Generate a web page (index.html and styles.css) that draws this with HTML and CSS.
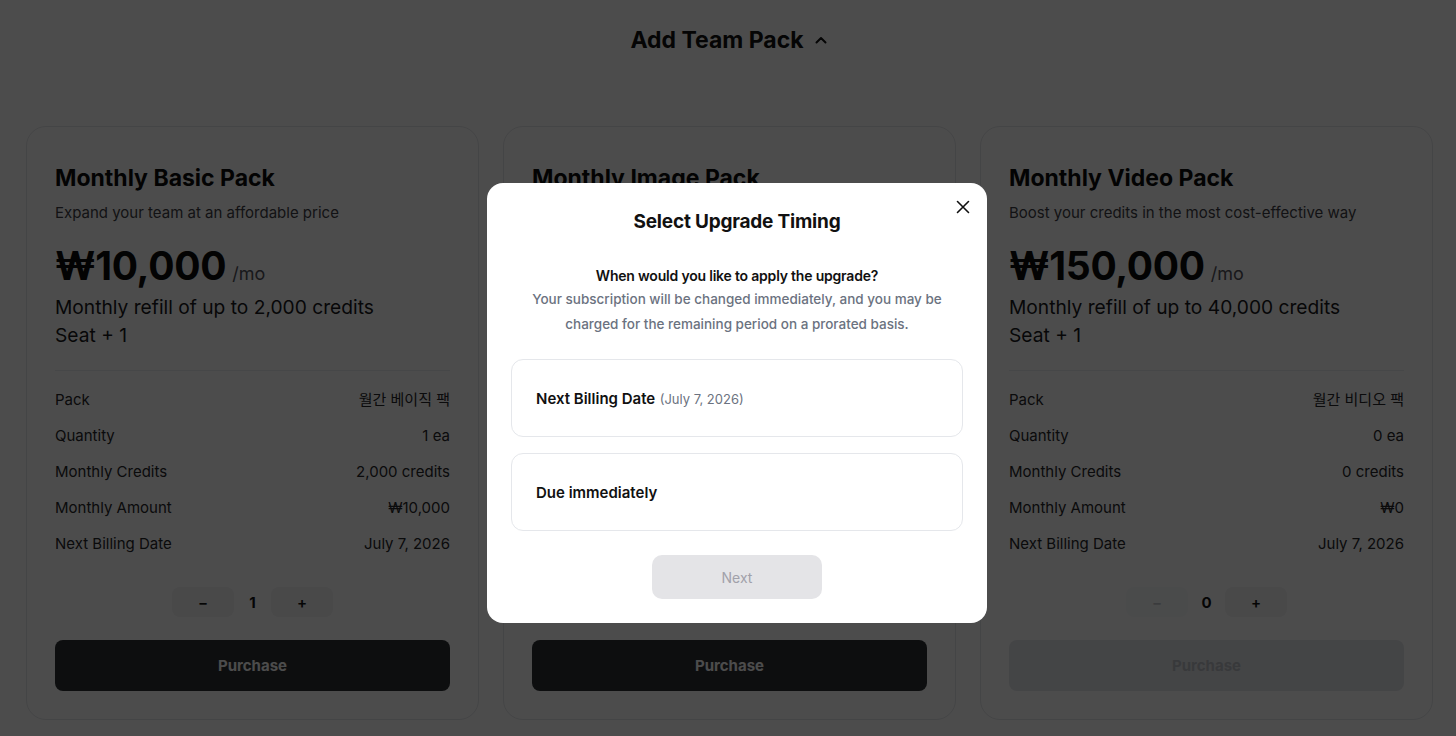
FILE: index.html
```html
<!DOCTYPE html>
<html lang="en">
<head>
<meta charset="utf-8">
<title>Add Team Pack</title>
<link rel="stylesheet" href="styles.css">
</head>
<body>
<main class="page">
  <header class="section-head">
    <h2 class="section-title">Add Team Pack</h2>
    <svg class="chev" width="16" height="16" viewBox="0 0 16 16" fill="none"><path d="M3.5 10.5L8 6l4.5 4.5" stroke="#111" stroke-width="2" stroke-linecap="round" stroke-linejoin="round"/></svg>
  </header>

  <section class="cards">
    <article class="card">
      <h3 class="card-title">Monthly Basic Pack</h3>
      <p class="card-sub">Expand your team at an affordable price</p>
      <div class="price"><span class="amount">₩10,000</span><span class="per">/mo</span></div>
      <p class="refill">Monthly refill of up to 2,000 credits<br>Seat + 1</p>
      <dl class="details">
        <div class="row"><dt>Pack</dt><dd>월간 베이직 팩</dd></div>
        <div class="row"><dt>Quantity</dt><dd>1 ea</dd></div>
        <div class="row"><dt>Monthly Credits</dt><dd>2,000 credits</dd></div>
        <div class="row"><dt>Monthly Amount</dt><dd>₩10,000</dd></div>
        <div class="row"><dt>Next Billing Date</dt><dd>July 7, 2026</dd></div>
      </dl>
      <div class="stepper">
        <button class="step">−</button>
        <span class="qty">1</span>
        <button class="step">+</button>
      </div>
      <button class="buy">Purchase</button>
    </article>

    <article class="card">
      <h3 class="card-title">Monthly Image Pack</h3>
      <p class="card-sub">Create more images for your whole team</p>
      <div class="price"><span class="amount">₩50,000</span><span class="per">/mo</span></div>
      <p class="refill">Monthly refill of up to 12,000 credits<br>Seat + 1</p>
      <dl class="details">
        <div class="row"><dt>Pack</dt><dd>월간 이미지 팩</dd></div>
        <div class="row"><dt>Quantity</dt><dd>1 ea</dd></div>
        <div class="row"><dt>Monthly Credits</dt><dd>12,000 credits</dd></div>
        <div class="row"><dt>Monthly Amount</dt><dd>₩50,000</dd></div>
        <div class="row"><dt>Next Billing Date</dt><dd>July 7, 2026</dd></div>
      </dl>
      <div class="stepper">
        <button class="step">−</button>
        <span class="qty">1</span>
        <button class="step">+</button>
      </div>
      <button class="buy">Purchase</button>
    </article>

    <article class="card">
      <h3 class="card-title">Monthly Video Pack</h3>
      <p class="card-sub">Boost your credits in the most cost-effective way</p>
      <div class="price"><span class="amount">₩150,000</span><span class="per">/mo</span></div>
      <p class="refill">Monthly refill of up to 40,000 credits<br>Seat + 1</p>
      <dl class="details">
        <div class="row"><dt>Pack</dt><dd>월간 비디오 팩</dd></div>
        <div class="row"><dt>Quantity</dt><dd>0 ea</dd></div>
        <div class="row"><dt>Monthly Credits</dt><dd>0 credits</dd></div>
        <div class="row"><dt>Monthly Amount</dt><dd>₩0</dd></div>
        <div class="row"><dt>Next Billing Date</dt><dd>July 7, 2026</dd></div>
      </dl>
      <div class="stepper">
        <button class="step is-disabled">−</button>
        <span class="qty">0</span>
        <button class="step">+</button>
      </div>
      <button class="buy is-disabled">Purchase</button>
    </article>
  </section>
</main>

<div class="overlay">
  <div class="modal" role="dialog">
    <button class="close" aria-label="Close">
      <svg width="14" height="14" viewBox="0 0 14 14" fill="none"><path d="M1.5 1.5l11 11M12.5 1.5l-11 11" stroke="#111" stroke-width="1.6" stroke-linecap="round"/></svg>
    </button>
    <h2 class="modal-title">Select Upgrade Timing</h2>
    <div class="modal-text">
      <p class="question">When would you like to apply the upgrade?</p>
      <p class="desc">Your subscription will be changed immediately, and you may be charged for the remaining period on a prorated basis.</p>
    </div>
    <div class="options">
      <div class="option"><span class="opt-label">Next Billing Date</span> <span class="opt-note">(July 7, 2026)</span></div>
      <div class="option"><span class="opt-label">Due immediately</span></div>
    </div>
    <div class="actions">
      <button class="next">Next</button>
    </div>
  </div>
</div>
</body>
</html>
```

FILE: styles.css
```css
* { box-sizing: border-box; }
html, body { margin: 0; padding: 0; }
body {
  background: #ffffff;
  font-family: Inter, "Noto Sans CJK KR", "Noto Sans", sans-serif;
  color: #111111;
  width: 1456px;
  height: 736px;
  overflow: hidden;
}
p, h2, h3, dl, dd { margin: 0; }
button { font-family: inherit; border: 0; cursor: pointer; }

.page { padding: 24px 23px 0 26px; }

.section-head {
  display: flex;
  align-items: center;
  justify-content: center;
  gap: 9px;
  height: 32px;
}
.section-title {
  font-size: 23px;
  line-height: 32px;
  font-weight: 700;
  color: #111;
}
.chev { margin-top: -1px; }

.cards {
  margin-top: 70px;
  display: grid;
  grid-template-columns: repeat(3, 1fr);
  gap: 24px;
}

.card {
  border: 1px solid #e5e7eb;
  border-radius: 20px;
  padding: 37px 28px 28px;
  display: flex;
  flex-direction: column;
  background: #fff;
}
.card-title {
  font-size: 23px;
  line-height: 28px;
  font-weight: 700;
  color: #0a0a0a;
}
.card-sub {
  margin-top: 11px;
  font-size: 15px;
  line-height: 20px;
  color: #3f3f46;
}
.price {
  margin-top: 19px;
  display: flex;
  align-items: baseline;
  gap: 6px;
  height: 48px;
}
.amount {
  font-size: 39px;
  line-height: 48px;
  font-weight: 700;
  color: #0a0a0a;
  letter-spacing: -0.3px;
}
.per {
  font-size: 18px;
  color: #52525b;
}
.refill {
  margin-top: 3px;
  font-size: 19.2px;
  line-height: 28px;
  color: #18181b;
}
.details {
  margin-top: 21px;
  border-top: 1px solid #eceef1;
  padding-top: 19px;
  display: flex;
  flex-direction: column;
  gap: 16px;
}
.row {
  display: flex;
  justify-content: space-between;
  font-size: 15px;
  line-height: 20px;
  color: #27272a;
}

.stepper {
  margin-top: 33px;
  display: flex;
  justify-content: center;
  align-items: center;
  height: 30px;
}
.step {
  width: 62px;
  height: 30px;
  border-radius: 8px;
  background: #f4f4f5;
  font-size: 15px;
  color: #111;
  font-weight: 600;
}
.step.is-disabled { color: #c4c7cc; background: #f9fafb; }
.qty {
  width: 37px;
  text-align: center;
  font-size: 15px;
  font-weight: 700;
  color: #111;
}

.buy {
  margin-top: 23px;
  height: 51px;
  border-radius: 8px;
  background: #2c2f33;
  color: #ffffff;
  font-size: 15px;
  font-weight: 700;
}
.buy.is-disabled {
  background: #e5e7eb;
  color: #bcc0c6;
}

/* modal */
.overlay {
  position: fixed;
  inset: 0;
  background: rgba(0, 0, 0, 0.7);
}
.modal {
  position: absolute;
  left: 487px;
  top: 183px;
  width: 500px;
  background: #fff;
  border-radius: 16px;
  padding: 25px 24px 24px;
  display: flex;
  flex-direction: column;
}
.close {
  position: absolute;
  top: 17px;
  right: 17px;
  width: 14px;
  height: 14px;
  padding: 0;
  background: none;
  display: flex;
}
.modal-title {
  text-align: center;
  font-size: 19px;
  line-height: 28px;
  font-weight: 700;
  color: #111;
  letter-spacing: -0.2px;
}
.modal-text {
  margin-top: 28px;
  text-align: center;
  font-size: 14px;
  line-height: 24px;
}
.question {
  font-weight: 600;
  color: #111;
  letter-spacing: -0.2px;
}
.desc {
  margin-top: -1px;
  padding: 0 16px;
  font-size: 13.5px;
  font-weight: 500;
  color: #6b7280;
  line-height: 24.5px;
}
.options {
  margin-top: 23px;
  display: flex;
  flex-direction: column;
  gap: 16px;
}
.option {
  border: 1px solid #e5e7eb;
  border-radius: 12px;
  padding: 26px 24px;
  line-height: 24px;
  height: 78px;
}
.opt-label {
  font-size: 15px;
  font-weight: 600;
  color: #111;
}
.opt-note {
  font-size: 13px;
  color: #6b7280;
}
.actions {
  margin-top: 24px;
  display: flex;
  justify-content: center;
}
.next {
  width: 170px;
  height: 44px;
  border-radius: 10px;
  background: #e4e4e7;
  color: #a1a1aa;
  font-size: 14px;
  font-weight: 400;
}
```
